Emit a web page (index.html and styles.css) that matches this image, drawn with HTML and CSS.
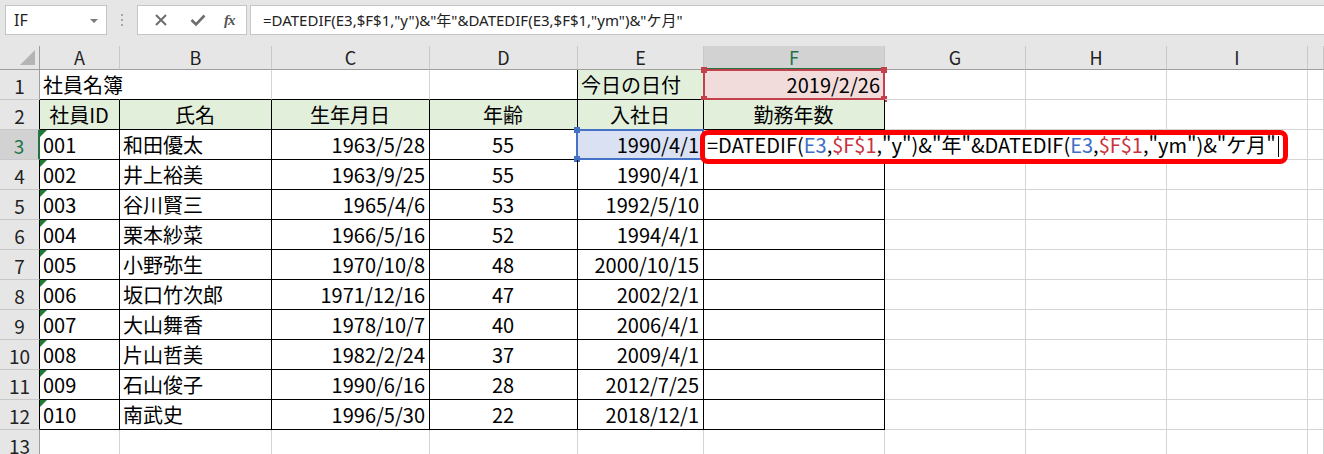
FILE: index.html
```html
<!DOCTYPE html>
<html lang="ja">
<head>
<meta charset="utf-8">
<title>社員名簿</title>
<link rel="stylesheet" href="styles.css">
</head>
<body>
<div class="toolbar">
  <div class="namebox">IF<span class="nb-arrow"></span></div>
  <div class="grip"><span></span><span></span><span></span></div>
  <div class="fbtns">
    <svg class="ico" width="22" height="22" viewBox="0 0 22 22"><path d="M6 6 L16 16 M16 6 L6 16" stroke="#6d6d6d" stroke-width="2" fill="none"/></svg>
    <svg class="ico" width="22" height="22" viewBox="0 0 22 22"><path d="M4.5 11 L9 15.5 L17.5 6.5" stroke="#6d6d6d" stroke-width="2.6" fill="none"/></svg>
    <span class="fx">fx</span>
  </div>
  <div class="finput">=DATEDIF(E3,$F$1,"y")&amp;"年"&amp;DATEDIF(E3,$F$1,"ym")&amp;"ケ月"</div>
</div>
<div class="sheet">
  <!-- header row -->
  <div class="ch corner"><span class="corner-tri"></span></div>
  <div class="ch">A</div><div class="ch">B</div><div class="ch">C</div><div class="ch">D</div><div class="ch">E</div>
  <div class="ch ch-sel">F</div><div class="ch">G</div><div class="ch">H</div><div class="ch">I</div><div class="ch"></div>

  <!-- row 1 -->
  <div class="rh">1</div>
  <div class="c bb over">社員名簿</div><div class="c bb"></div><div class="c bb"></div><div class="c bb br"></div>
  <div class="c b g">今日の日付</div>
  <div class="c b pink r">2019/2/26<span class="sel-red"><i class="hd tl"></i><i class="hd tr"></i><i class="hd bl"></i><i class="hd br2"></i></span></div>
  <div class="c"></div><div class="c"></div><div class="c"></div><div class="c"></div>

  <!-- row 2 -->
  <div class="rh rk">2</div>
  <div class="c b g m">社員ID</div><div class="c b g m">氏名</div><div class="c b g m">生年月日</div><div class="c b g m">年齢</div><div class="c b g m">入社日</div><div class="c b g m">勤務年数</div>
  <div class="c"></div><div class="c"></div><div class="c"></div><div class="c"></div>

  <!-- row 3 -->
  <div class="rh rh-sel">3</div>
  <div class="c b tri">001</div><div class="c b">和田優太</div><div class="c b r">1963/5/28</div><div class="c b m">55</div>
  <div class="c b r blue">1990/4/1<span class="sel-blue"><i class="hd tl"></i><i class="hd bl"></i></span></div>
  <div class="c b edit-cell"><div class="editor">=DATEDIF(<span class="ref-b">E3</span>,<span class="ref-r">$F$1</span>,"y")&amp;"年"&amp;DATEDIF(<span class="ref-b">E3</span>,<span class="ref-r">$F$1</span>,"ym")&amp;"ケ月"<span class="caret"></span></div><div class="callout"></div></div>
  <div class="c"></div><div class="c"></div><div class="c"></div><div class="c"></div>

  <!-- row 4 -->
  <div class="rh rk">4</div>
  <div class="c b tri">002</div><div class="c b">井上裕美</div><div class="c b r">1963/9/25</div><div class="c b m">55</div><div class="c b r">1990/4/1</div><div class="c b"></div>
  <div class="c"></div><div class="c"></div><div class="c"></div><div class="c"></div>

  <!-- row 5 -->
  <div class="rh rk">5</div>
  <div class="c b tri">003</div><div class="c b">谷川賢三</div><div class="c b r">1965/4/6</div><div class="c b m">53</div><div class="c b r">1992/5/10</div><div class="c b"></div>
  <div class="c"></div><div class="c"></div><div class="c"></div><div class="c"></div>

  <!-- row 6 -->
  <div class="rh rk">6</div>
  <div class="c b tri">004</div><div class="c b">栗本紗菜</div><div class="c b r">1966/5/16</div><div class="c b m">52</div><div class="c b r">1994/4/1</div><div class="c b"></div>
  <div class="c"></div><div class="c"></div><div class="c"></div><div class="c"></div>

  <!-- row 7 -->
  <div class="rh rk">7</div>
  <div class="c b tri">005</div><div class="c b">小野弥生</div><div class="c b r">1970/10/8</div><div class="c b m">48</div><div class="c b r">2000/10/15</div><div class="c b"></div>
  <div class="c"></div><div class="c"></div><div class="c"></div><div class="c"></div>

  <!-- row 8 -->
  <div class="rh rk">8</div>
  <div class="c b tri">006</div><div class="c b">坂口竹次郎</div><div class="c b r">1971/12/16</div><div class="c b m">47</div><div class="c b r">2002/2/1</div><div class="c b"></div>
  <div class="c"></div><div class="c"></div><div class="c"></div><div class="c"></div>

  <!-- row 9 -->
  <div class="rh rk">9</div>
  <div class="c b tri">007</div><div class="c b">大山舞香</div><div class="c b r">1978/10/7</div><div class="c b m">40</div><div class="c b r">2006/4/1</div><div class="c b"></div>
  <div class="c"></div><div class="c"></div><div class="c"></div><div class="c"></div>

  <!-- row 10 -->
  <div class="rh rk">10</div>
  <div class="c b tri">008</div><div class="c b">片山哲美</div><div class="c b r">1982/2/24</div><div class="c b m">37</div><div class="c b r">2009/4/1</div><div class="c b"></div>
  <div class="c"></div><div class="c"></div><div class="c"></div><div class="c"></div>

  <!-- row 11 -->
  <div class="rh rk">11</div>
  <div class="c b tri">009</div><div class="c b">石山俊子</div><div class="c b r">1990/6/16</div><div class="c b m">28</div><div class="c b r">2012/7/25</div><div class="c b"></div>
  <div class="c"></div><div class="c"></div><div class="c"></div><div class="c"></div>

  <!-- row 12 -->
  <div class="rh rk">12</div>
  <div class="c b tri">010</div><div class="c b">南武史</div><div class="c b r">1996/5/30</div><div class="c b m">22</div><div class="c b r">2018/12/1</div><div class="c b"></div>
  <div class="c"></div><div class="c"></div><div class="c"></div><div class="c"></div>

  <!-- row 13 -->
  <div class="rh">13</div>
  <div class="c"></div><div class="c"></div><div class="c"></div><div class="c"></div><div class="c"></div><div class="c"></div>
  <div class="c"></div><div class="c"></div><div class="c"></div><div class="c"></div>
</div>
</body>
</html>
```

FILE: styles.css
```css
* { box-sizing: border-box; }

body {
  margin: 0;
  width: 1324px;
  height: 454px;
  overflow: hidden;
  background: #e6e6e6;
  font-family: "Noto Sans CJK JP", sans-serif;
  color: #000;
}

/* ---------- formula bar ---------- */
.toolbar {
  height: 46px;
  display: flex;
  align-items: flex-start;
  padding-top: 5px;
}

.namebox {
  position: relative;
  margin-left: 5px;
  width: 102px;
  height: 30px;
  border: 1px solid #c6c6c6;
  background: #fff;
  padding-left: 8px;
  font: 16px/28px "Noto Sans", sans-serif;
  color: #222;
}

.nb-arrow {
  position: absolute;
  right: 8px;
  top: 13px;
  border-left: 4px solid transparent;
  border-right: 4px solid transparent;
  border-top: 4px solid #7a7a7a;
}

.grip {
  width: 30px;
  height: 30px;
  display: flex;
  flex-direction: column;
  align-items: center;
  justify-content: center;
  gap: 3px;
}

.grip span {
  width: 2px;
  height: 2px;
  background: #a8a8a8;
}

.fbtns {
  width: 110px;
  height: 30px;
  border: 1px solid #c6c6c6;
  background: #fff;
  display: flex;
  align-items: center;
  justify-content: space-around;
  padding: 0 4px;
}

.fx {
  font: italic 15px "Liberation Serif", serif;
  color: #555;
  font-weight: bold;
  letter-spacing: -1px;
}

.finput {
  flex: 1;
  margin-left: 3px;
  height: 30px;
  border: 1px solid #c6c6c6;
  border-right: none;
  background: #fff;
  padding-left: 12px;
  font: 15px/28px "Noto Sans", "Noto Sans CJK JP", sans-serif;
  color: #222;
  white-space: nowrap;
}

/* ---------- sheet grid ---------- */
.sheet {
  display: grid;
  grid-template-columns: 40px 80px 152px 158px 148px 126px 181px 141px 141px 141px 1fr;
  grid-template-rows: 24px repeat(13, 30px);
  background: #fff;
}

.ch {
  background: #e6e6e6;
  border-right: 1px solid #c8c8c8;
  border-bottom: 1px solid #9e9e9e;
  text-align: center;
  font-size: 18px;
  line-height: 23px;
  color: #222;
}

.corner {
  position: relative;
  border-right-color: #9e9e9e;
}

.corner-tri {
  position: absolute;
  right: 4px;
  bottom: 4px;
  border-left: 15px solid transparent;
  border-bottom: 15px solid #b4b4b4;
}

.ch-sel {
  background: #d2d2d2;
  color: #217346;
  border-bottom: 2px solid #217346;
}

.rh {
  background: #e6e6e6;
  border-right: 1px solid #9e9e9e;
  border-bottom: 1px solid #c8c8c8;
  text-align: center;
  font-size: 19px;
  line-height: 31px;
  color: #222;
}

.rk { border-right-color: #000; }

.rh-sel {
  background: #d2d2d2;
  color: #217346;
  border-right: 2px solid #217346;
}

.c {
  position: relative;
  border-right: 1px solid #d4d4d4;
  border-bottom: 1px solid #d4d4d4;
  font-size: 20px;
  line-height: 30px;
  padding: 0 4px 0 3px;
  white-space: nowrap;
}

.b { border-right-color: #000; border-bottom-color: #000; }
.bb { border-bottom-color: #000; }
.br { border-right-color: #000; }
.over { border-right-color: transparent; }

.g { background: #e2efda; }
.pink { background: #f2dcdb; }
.blue { background: #d9e1f2; }

.r { text-align: right; }
.m { text-align: center; }

.tri::before {
  content: "";
  position: absolute;
  left: 0;
  top: 0;
  border-top: 7px solid #1e7b34;
  border-right: 7px solid transparent;
}

/* range reference highlights */
.sel-red, .sel-blue {
  position: absolute;
  left: -1px;
  top: -1px;
  right: -1px;
  bottom: -1px;
  pointer-events: none;
}

.sel-red { border: 2px solid #c4414c; }
.sel-blue { border: 2px solid #4472c4; left: -2px; }

.hd {
  position: absolute;
  width: 6px;
  height: 6px;
}

.sel-red .hd { background: #c4414c; }
.sel-blue .hd { background: #4472c4; }

.hd.tl { left: -4px; top: -4px; }
.hd.tr { right: -4px; top: -4px; }
.hd.bl { left: -4px; bottom: -4px; }
.hd.br2 { right: -4px; bottom: -4px; }

/* in-cell editor */
.edit-cell { z-index: 3; }

.editor {
  position: absolute;
  left: 0;
  top: 0;
  width: 578px;
  height: 30px;
  background: #fff;
  padding-left: 3px;
  font-size: 20px;
  line-height: 30px;
  white-space: nowrap;
  z-index: 3;
}

.ref-b { color: #3f6fc6; }
.ref-r { color: #c8323e; }

.caret {
  display: inline-block;
  width: 1px;
  height: 21px;
  margin-left: 2px;
  background: #000;
  vertical-align: -4px;
}

.callout {
  position: absolute;
  left: -4px;
  top: 0;
  width: 588px;
  height: 34px;
  border: 5px solid #ff0000;
  border-radius: 8px;
  z-index: 4;
}
```
